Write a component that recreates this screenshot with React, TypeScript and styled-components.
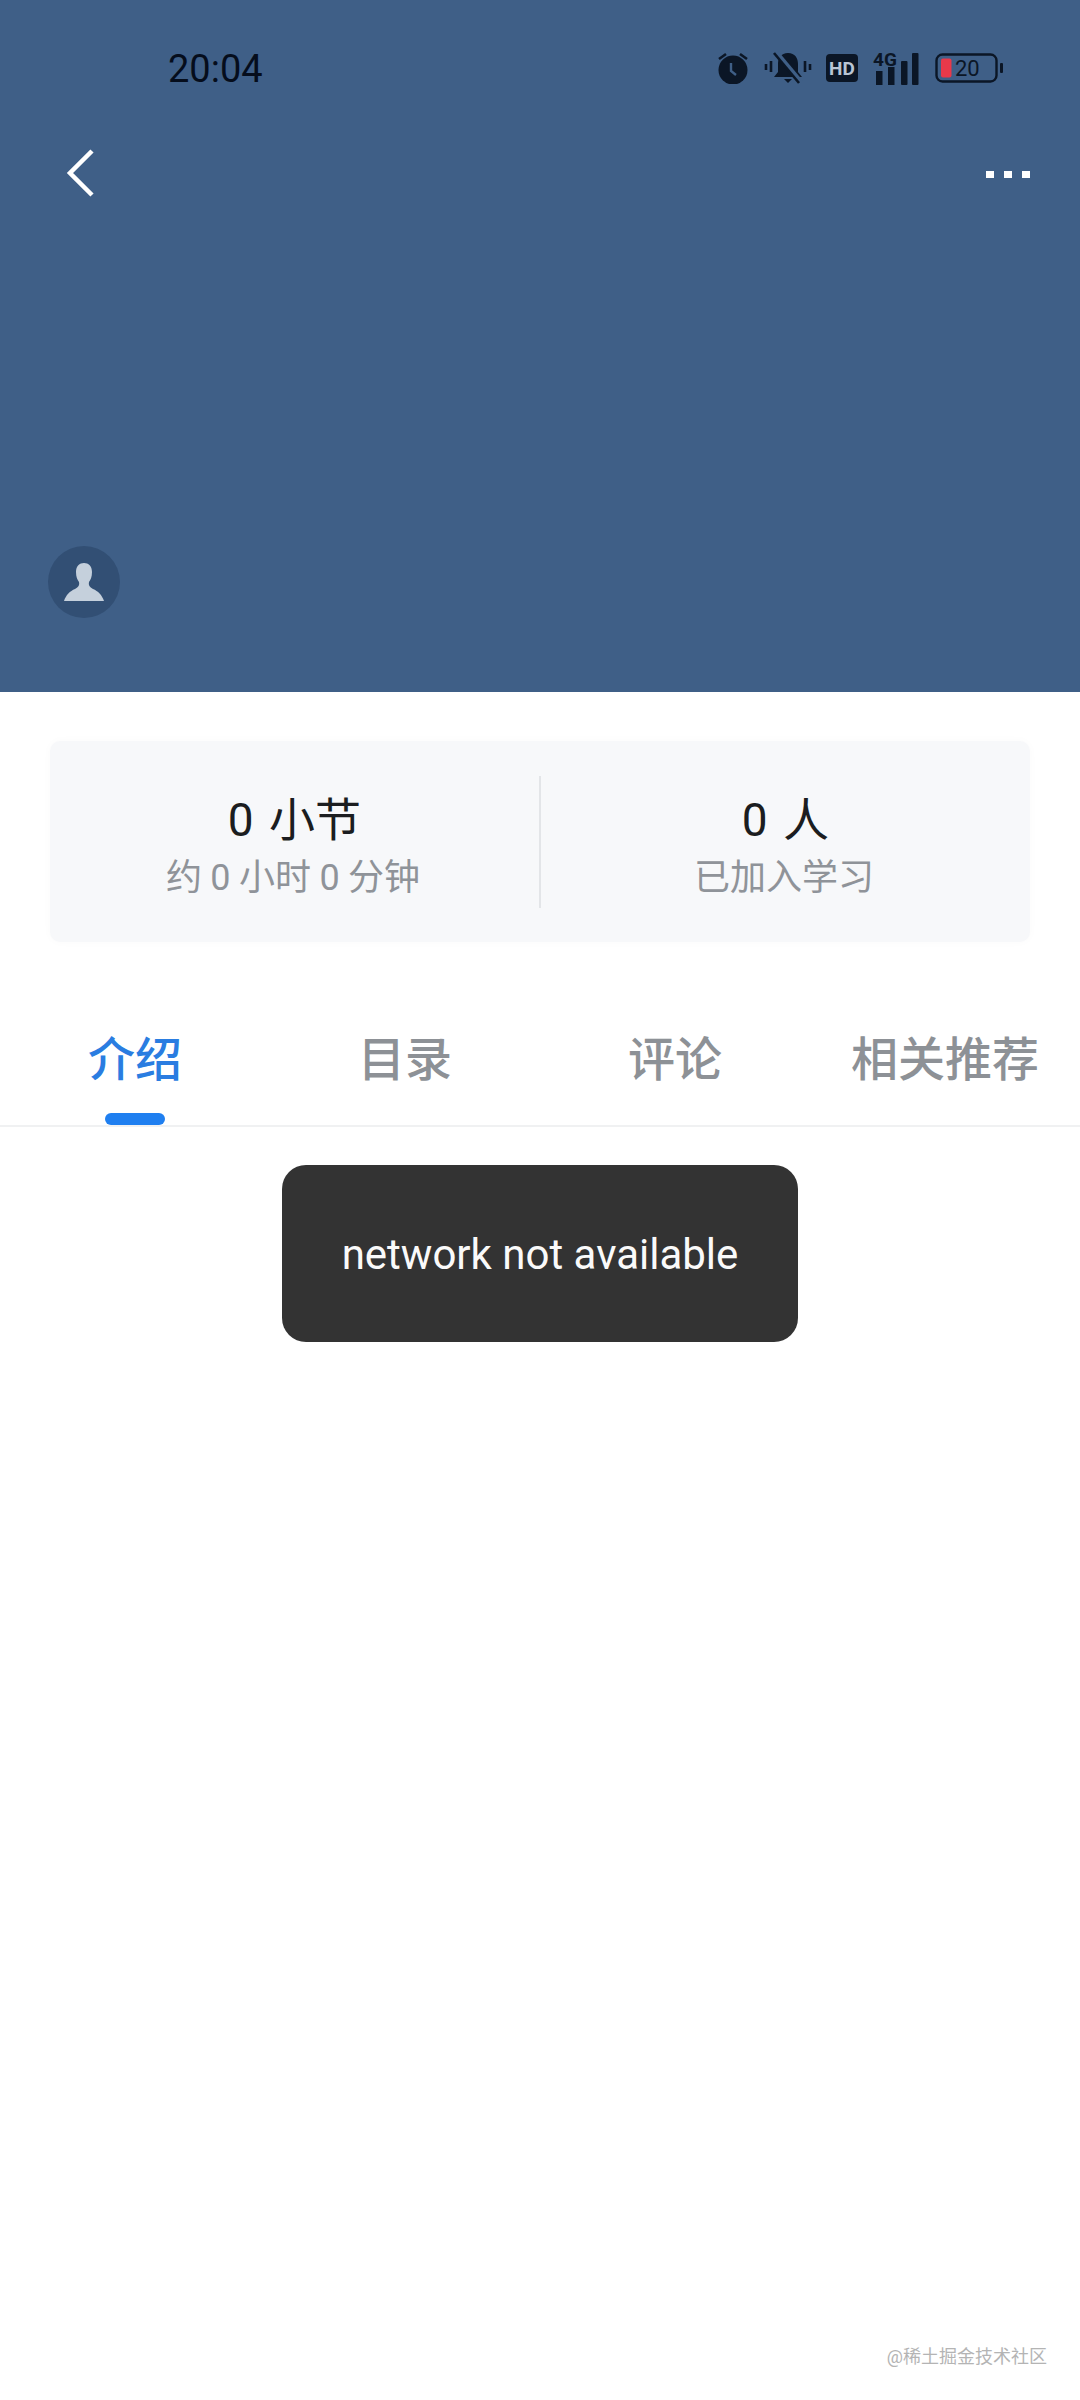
import React from "react";
import styled, { createGlobalStyle } from "styled-components";

const Global = createGlobalStyle`
  html, body { margin: 0; padding: 0; background: #fff; }
  * { box-sizing: border-box; }
  body { font-family: Roboto, "Noto Sans CJK SC", sans-serif; }
`;

const Page = styled.div`
  width: 1080px;
  height: 2400px;
  display: flex;
  flex-direction: column;
  overflow: hidden;
  background: #fff;
`;

const Hero = styled.header`
  height: 692px;
  background: #3f5f87;
  display: flex;
  flex-direction: column;
  padding: 43px 0 74px;
`;

const StatusBar = styled.div`
  height: 50px;
  display: flex;
  align-items: center;
  justify-content: space-between;
  padding: 0 77px 0 168px;
`;

const Clock = styled.span`
  font-size: 38px;
  line-height: 50px;
  padding-top: 2px;
  color: #050d1c;
`;

const StatusIcons = styled.div`
  display: flex;
  align-items: center;
  gap: 14.5px;
`;

const NavBar = styled.div`
  margin-top: 52px;
  height: 56px;
  display: flex;
  align-items: center;
  justify-content: space-between;
  padding: 0 50px 0 65px;
`;

const Avatar = styled.div`
  margin: auto 0 0 48px;
  width: 72px;
  height: 72px;
  border-radius: 50%;
  background: #324f74;
  display: flex;
  align-items: center;
  justify-content: center;
`;

const StatsCard = styled.section`
  margin: 49px 50px 0;
  height: 201px;
  background: #f7f8fa;
  border-radius: 10px;
  box-shadow: 0 0 10px rgba(40, 50, 70, 0.025);
  display: flex;
  align-items: center;
`;

const Stat = styled.div`
  flex: 1;
  padding-top: 11px;
  display: flex;
  flex-direction: column;
  align-items: center;
  gap: 5px;
`;

const StatDivider = styled.div`
  width: 2px;
  height: 132px;
  background: #e3e5e8;
`;

const StatValue = styled.div`
  font-size: 46px;
  line-height: 56px;
  word-spacing: 4px;
  color: #1b1d20;
`;

const StatLabel = styled.div`
  font-size: 36px;
  line-height: 50px;
  word-spacing: -0.5px;
  margin-right: 3px;
  color: #8f9399;
`;

const Tabs = styled.nav`
  margin-top: 49px;
  height: 136px;
  display: grid;
  grid-template-columns: repeat(4, 1fr);
  border-bottom: 2px solid #f0f1f2;
`;

const Tab = styled.div<{ $active?: boolean }>`
  position: relative;
  text-align: center;
  font-size: 47px;
  line-height: 64px;
  padding-top: 37px;
  font-weight: 500;
  color: ${(p) => (p.$active ? "#2a7de1" : "#8d9196")};
`;

const TabMark = styled.span`
  position: absolute;
  left: 50%;
  bottom: 0;
  width: 60px;
  height: 12px;
  margin-left: -30px;
  border-radius: 6px;
  background: #1f7ff0;
`;

const Content = styled.main`
  position: relative;
  flex: 1;
  display: flex;
  flex-direction: column;
  justify-content: flex-end;
  align-items: flex-end;
  padding: 0 33px 30px 0;
`;

const Toast = styled.div`
  position: absolute;
  top: 38px;
  left: 282px;
  width: 516px;
  height: 177px;
  border-radius: 24px;
  background: #333333;
  color: #fafafa;
  font-size: 42px;
  padding-top: 2px;
  display: flex;
  align-items: center;
  justify-content: center;
`;

const Watermark = styled.div`
  font-size: 18px;
  line-height: 26px;
  color: #b4b4b4;
`;

const ink = "#0b1626";

const AlarmIcon = () => (
  <svg width="32" height="32" viewBox="0 0 32 32">
    <circle cx="16" cy="18" r="14.5" fill={ink} />
    <path d="M2 7 9 2M30 7l-7-5" stroke={ink} strokeWidth="2.6" fill="none" />
    <path d="M14 11v8l5 4" stroke="#3f5f87" strokeWidth="2.4" fill="none" />
  </svg>
);

const MuteIcon = () => (
  <svg width="48" height="34" viewBox="0 0 48 34">
    <path d="M24 2c-7 0-10 5-10 11v8l-4 5h28l-4-5v-8c0-6-3-11-10-11z" fill={ink} />
    <path d="M20 28h8l-4 4z" fill={ink} />
    <path d="M12 1 37 31" stroke="#3f5f87" strokeWidth="4.5" />
    <path d="M10 2 35 32" stroke={ink} strokeWidth="2.6" />
    <path d="M2 13v6M7 10v11M41 10v11M46 13v6" stroke={ink} strokeWidth="2.6" />
  </svg>
);

const HdIcon = () => (
  <svg width="32" height="28" viewBox="0 0 32 28">
    <rect width="32" height="28" rx="4" fill={ink} />
    <text x="16" y="21" textAnchor="middle" fontFamily="Roboto, sans-serif" fontWeight="700" fontSize="19" fill="#b9c5d4">HD</text>
  </svg>
);

const SignalIcon = () => (
  <svg width="48" height="34" viewBox="0 0 48 34">
    <text x="0" y="15" fontFamily="Roboto, sans-serif" fontWeight="700" fontSize="19" fill={ink}>4G</text>
    <rect x="3" y="20" width="6.5" height="14" fill={ink} />
    <rect x="15" y="16" width="6.5" height="18" fill={ink} />
    <rect x="28" y="10" width="6.5" height="24" rx="1" fill={ink} />
    <rect x="39" y="2" width="6.5" height="32" rx="1" fill={ink} />
  </svg>
);

const BatteryIcon = () => (
  <svg width="68" height="30" viewBox="0 0 68 30">
    <rect x="1.5" y="1.5" width="60" height="27" rx="6" fill="none" stroke={ink} strokeWidth="2.4" />
    <rect x="6" y="5.5" width="10.5" height="19" rx="2" fill="#e8394a" />
    <rect x="65" y="10" width="3" height="10" rx="1" fill={ink} />
    <text x="20" y="23" fontFamily="Roboto, sans-serif" fontSize="22" fill={ink}>20</text>
  </svg>
);

const BackIcon = () => (
  <svg width="30" height="50" viewBox="0 0 30 50">
    <path d="M27 3 5 25l22 22" fill="none" stroke="#fff" strokeWidth="4.5" />
  </svg>
);

const MoreIcon = () => (
  <svg width="44" height="14" viewBox="0 0 44 14">
    <rect x="0" y="5" width="8" height="7" fill="#fff" />
    <rect x="18" y="5" width="8" height="7" fill="#fff" />
    <rect x="36" y="5" width="8" height="7" fill="#fff" />
  </svg>
);

const PersonIcon = () => (
  <svg width="40" height="40" viewBox="0 0 40 40">
    <path
      d="M20 1c-4.500 0-8 3-8 9 0 5 1.500 8 3 10 .8 3-.5 5-4 7C6 29 2 33 0 39h40c-2-6-6-10-11-12-3.500-2-4.800-4-4-7 1.500-2 3-5 3-10 0-6-3.500-9-8-9z"
      fill="#c5d0dc"
    />
  </svg>
);

export default function App() {
  return (
    <Page>
      <Global />
      <Hero>
        <StatusBar>
          <Clock>20:04</Clock>
          <StatusIcons>
            <AlarmIcon />
            <MuteIcon />
            <HdIcon />
            <SignalIcon />
            <BatteryIcon />
          </StatusIcons>
        </StatusBar>
        <NavBar>
          <BackIcon />
          <MoreIcon />
        </NavBar>
        <Avatar>
          <PersonIcon />
        </Avatar>
      </Hero>
      <StatsCard>
        <Stat>
          <StatValue>0 小节</StatValue>
          <StatLabel>约 0 小时 0 分钟</StatLabel>
        </Stat>
        <StatDivider />
        <Stat>
          <StatValue>0 人</StatValue>
          <StatLabel>已加入学习</StatLabel>
        </Stat>
      </StatsCard>
      <Tabs>
        <Tab $active>
          介绍
          <TabMark />
        </Tab>
        <Tab>目录</Tab>
        <Tab>评论</Tab>
        <Tab>相关推荐</Tab>
      </Tabs>
      <Content>
        <Toast>network not available</Toast>
        <Watermark>@稀土掘金技术社区</Watermark>
      </Content>
    </Page>
  );
}
